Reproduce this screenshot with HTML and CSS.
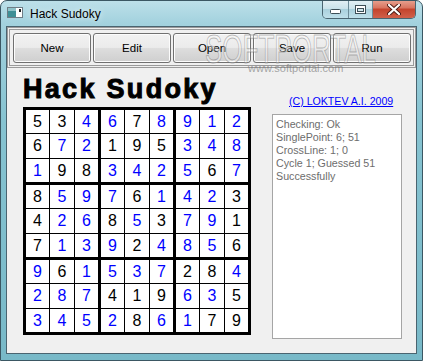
FILE: index.html
```html
<!DOCTYPE html>
<html lang="en">
<head>
  <meta charset="UTF-8" />
  <title>Hack Sudoky</title>
  <link rel="stylesheet" href="styles.css">
</head>
<body>
  <div class="window">
    <div class="titlebar">
      <svg class="app-icon" width="16" height="11" viewBox="0 0 16 11">
        <rect x="0.5" y="0.5" width="15" height="10" fill="#fff" stroke="#6f7d86" />
        <rect x="1" y="1" width="8" height="9" fill="#3f8f96" />
        <rect x="1" y="1" width="8" height="3" fill="#8fc3c9" />
        <rect x="12" y="2" width="2" height="3" fill="#222" />
      </svg>
      <span class="title">Hack Sudoky</span>
      <div class="controls">
        <span class="ctl min">
          <svg width="11" height="5" viewBox="0 0 11 5"><rect x="0.5" y="0.5" width="10" height="4" rx="1" fill="#fff" stroke="#3d4f57" /></svg>
        </span>
        <span class="ctl max">
          <svg width="11" height="9" viewBox="0 0 11 9"><rect x="0.5" y="0.5" width="10" height="8" fill="#fff" stroke="#3d4f57" /><rect x="2.5" y="3.5" width="6" height="3" fill="#cfe6ec" stroke="#3d4f57" /></svg>
        </span>
        <span class="ctl close">
          <svg width="14" height="11" viewBox="0 0 14 11"><path d="M2 1 L12 10 M12 1 L2 10" stroke="#4a1a14" stroke-width="4" stroke-linecap="round" /><path d="M2 1 L12 10 M12 1 L2 10" stroke="#fff" stroke-width="2.2" stroke-linecap="round" /></svg>
        </span>
      </div>
    </div>

    <div class="client">
      <div class="toolbar">
        <button class="btn">New</button>
        <button class="btn">Edit</button>
        <button class="btn">Open</button>
        <button class="btn">Save</button>
        <button class="btn">Run</button>
      </div>

      <div class="main">
        <div class="left">
          <h1 class="heading">Hack Sudoky</h1>
          <div class="board" id="board"></div>
        </div>
        <div class="right">
          <a class="credit" href="#">(C) LOKTEV A.I. 2009</a>
          <div class="memo">
            <div>Checking: Ok</div>
            <div>SinglePoint: 6; 51</div>
            <div>CrossLine: 1; 0</div>
            <div>Cycle 1; Guessed 51</div>
            <div>Successfully</div>
          </div>
        </div>
      </div>
    </div>

    <div class="watermark">SOFTPORTAL</div>
    <div class="watermark-url">www.softportal.com</div>
  </div>

  <script>
    // digits per row, and which ones were solved (1 = blue)
    const rows = [
      ["534678912", "001101111"],
      ["672195348", "011000111"],
      ["198342567", "100111101"],
      ["859761423", "011101110"],
      ["426853791", "011010110"],
      ["713924856", "011101110"],
      ["961537284", "101111001"],
      ["287419635", "111000110"],
      ["345286179", "111101100"]
    ];

    const board = document.getElementById("board");
    for (let b = 0; b < 9; b++) {
      const box = document.createElement("div");
      box.className = "box";
      for (let i = 0; i < 9; i++) {
        const r = Math.floor(b / 3) * 3 + Math.floor(i / 3);
        const c = (b % 3) * 3 + (i % 3);
        const cell = document.createElement("div");
        cell.className = rows[r][1][c] === "1" ? "cell solved" : "cell";
        cell.textContent = rows[r][0][c];
        box.appendChild(cell);
      }
      board.appendChild(box);
    }
  </script>
</body>
</html>
```

FILE: styles.css
```css
body {
  margin: 0;
  font-family: "Liberation Sans", Arial, sans-serif;
  background: #fff;
}
.window {
  position: relative;
  width: 423px;
  height: 361px;
  box-sizing: border-box;
  border: 1px solid #3b5763;
  border-radius: 7px 7px 0 0;
  background: linear-gradient(to bottom, #bde0e9 0, #a3d2de 22px, #86c3d1 120px, #78b9c8 100%);
  overflow: hidden;
}
.titlebar {
  display: flex;
  align-items: flex-start;
  height: 25px;
}
.app-icon {
  margin: 6px 0 0 6px;
}
.title {
  margin: 6px 0 0 7px;
  font-size: 12px;
  line-height: 15px;
  color: #000;
  text-shadow: 0 0 6px rgba(255, 255, 255, 0.9);
}
.controls {
  display: flex;
  margin: -1px 6px 0 auto;
  height: 18px;
  border: 1px solid #4a6571;
  border-top: none;
  border-radius: 0 0 5px 5px;
  overflow: hidden;
}
.ctl {
  display: flex;
  align-items: center;
  justify-content: center;
  height: 18px;
  background: linear-gradient(to bottom, #e4f1f5 0, #c9e2ea 50%, #a9d0dc 51%, #bfe0ea 100%);
}
.ctl.min {
  width: 25px;
  border-right: 1px solid #6d8c98;
}
.ctl.min svg {
  margin-top: 5px;
}
.ctl.max {
  width: 23px;
  border-right: 1px solid #6d8c98;
}
.ctl.close {
  width: 42px;
  background: linear-gradient(to bottom, #e8a493 0, #d8735e 45%, #c4432c 50%, #d0604a 100%);
}
.client {
  height: 328px;
  box-sizing: border-box;
  margin: 0 5px;
  border: 1px solid #4a6470;
  background: #f0f0f0;
}
.toolbar {
  display: flex;
  gap: 2px;
  padding: 3px 2px 2px 3px;
  border: 3px double #9a9a9a;
}
.btn {
  width: 78px;
  height: 30px;
  border: 1px solid #707070;
  border-radius: 3px;
  background: linear-gradient(to bottom, #f2f2f2 0, #ebebeb 48%, #dddddd 52%, #cfcfcf 100%);
  box-shadow: inset 0 0 0 1px #fcfcfc;
  font-family: "Liberation Sans", Arial, sans-serif;
  font-size: 11.5px;
  color: #000;
  padding: 0;
}
.main {
  display: flex;
  gap: 21px;
  padding: 6px 0 0 16px;
}
.heading {
  margin: 0 0 2px;
  font-size: 27px;
  line-height: 31px;
  font-weight: bold;
  letter-spacing: 2.3px;
  -webkit-text-stroke: 1px #000;
  color: #000;
}
.board {
  display: grid;
  grid-template-columns: repeat(3, auto);
  gap: 3px;
  padding: 3px;
  background: #000;
  width: max-content;
}
.box {
  display: grid;
  grid-template-columns: 23px 24px 23px;
  grid-template-rows: 23px 24px 23px;
  gap: 1px;
  background: #000;
}
.cell {
  display: flex;
  align-items: center;
  justify-content: center;
  background: #fff;
  font-size: 16px;
  color: #000;
}
.cell.solved {
  color: #0000ff;
}
.right {
  padding-top: 21px;
}
.credit {
  display: block;
  padding-left: 17px;
  font-size: 10.6px;
  line-height: 13px;
  color: #0000ff;
  text-decoration: underline;
}
.memo {
  width: 130px;
  height: 225px;
  box-sizing: border-box;
  margin-top: 6px;
  padding: 3px;
  border: 1px solid #a5a5a5;
  background: #fff;
  font-size: 10.7px;
  line-height: 13px;
  color: #6d6d6d;
}
.watermark {
  position: absolute;
  left: 204px;
  top: 28px;
  font-size: 40px;
  line-height: 40px;
  color: rgba(255, 255, 255, 0.35);
  -webkit-text-stroke: 1px rgba(110, 110, 110, 0.45);
  transform: scaleX(0.65);
  transform-origin: left top;
  pointer-events: none;
}
.watermark-url {
  position: absolute;
  left: 247px;
  top: 61px;
  font-size: 11px;
  line-height: 12px;
  color: rgba(110, 110, 110, 0.6);
  pointer-events: none;
}
```
